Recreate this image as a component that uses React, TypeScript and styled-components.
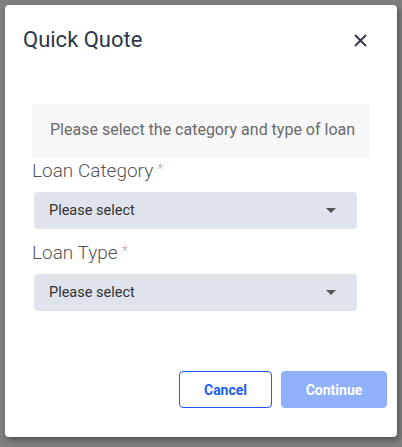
import React from 'react'
import styled, { createGlobalStyle } from 'styled-components'

const GlobalStyle = createGlobalStyle`
  html, body {
    margin: 0;
    padding: 0;
    background: #7f7f7f;
    font-family: Roboto, 'Liberation Sans', sans-serif;
  }
`

const Overlay = styled.div`
  width: 402px;
  height: 447px;
  padding: 5px;
  box-sizing: border-box;
`

const Modal = styled.div`
  width: 392px;
  height: 432px;
  background: #fff;
  border-radius: 4px;
  box-shadow: 2px 3px 6px rgba(0, 0, 0, 0.35);
  display: flex;
  flex-direction: column;
  box-sizing: border-box;
  padding: 22px 10px 29px 18px;
`

const Header = styled.div`
  display: flex;
  align-items: center;
  justify-content: space-between;
`

const Title = styled.h2`
  margin: 0;
  font-size: 22px;
  line-height: 26px;
  font-weight: 400;
  color: #2d3748;
`

const CloseButton = styled.button`
  border: 0;
  background: transparent;
  padding: 0;
  width: 14px;
  height: 14px;
  margin-right: 20px;
  display: flex;
  align-items: center;
  justify-content: center;
  cursor: pointer;
`

const Body = styled.div`
  display: flex;
  flex-direction: column;
  padding: 0 17px 0 9px;
  margin-top: 51px;
`

const Notice = styled.div`
  background: #f7f7f7;
  padding: 17px 18px 19px;
  font-size: 16px;
  line-height: 18px;
  color: #6a6a6a;
  white-space: nowrap;
`

const Label = styled.label<{ $gap: number }>`
  display: block;
  margin-top: ${(p) => p.$gap}px;
  font-size: 19px;
  line-height: 22px;
  font-weight: 300;
  color: #555;
`

const Required = styled.span`
  margin-left: 4px;
  font-size: 14px;
  color: #aaa;
  vertical-align: 3px;
`

const Select = styled.div`
  margin: 10px 13px 0 2px;
  height: 37px;
  background: #dfe3ec;
  border-radius: 4px;
  display: flex;
  align-items: center;
  justify-content: space-between;
  padding: 0 21px 0 15px;
  font-size: 14.5px;
  color: #333;
`

const Caret = styled.span`
  width: 0;
  height: 0;
  border-left: 5px solid transparent;
  border-right: 5px solid transparent;
  border-top: 5px solid #555;
`

const Footer = styled.div`
  margin-top: auto;
  display: flex;
  justify-content: flex-end;
  gap: 9px;
`

const Button = styled.button<{ $primary?: boolean }>`
  height: 37px;
  box-sizing: border-box;
  border-radius: 4px;
  font-family: Roboto, 'Liberation Sans', sans-serif;
  font-size: 14px;
  font-weight: 700;
  cursor: pointer;
  border: 1px solid ${(p) => (p.$primary ? '#8fb0fb' : '#1a5cf6')};
  background: ${(p) => (p.$primary ? '#8fb0fb' : '#fff')};
  color: ${(p) => (p.$primary ? '#fff' : '#1a5cf6')};
  width: ${(p) => (p.$primary ? 106 : 93)}px;
`

const Field = ({ label, gap }: { label: string; gap: number }) => (
  <>
    <Label $gap={gap}>
      {label}
      <Required>*</Required>
    </Label>
    <Select>
      Please select
      <Caret />
    </Select>
  </>
)

export default function App() {
  return (
    <>
      <GlobalStyle />
      <Overlay>
        <Modal>
          <Header>
            <Title>Quick Quote</Title>
            <CloseButton aria-label="Close">
              <svg width="13" height="13" viewBox="0 0 13 13">
                <path d="M1 1L12 12M12 1L1 12" stroke="#2d3748" strokeWidth="1.8" />
              </svg>
            </CloseButton>
          </Header>
          <Body>
            <Notice>Please select the category and type of loan</Notice>
            <Field label="Loan Category" gap={0} />
            <Field label="Loan Type" gap={11} />
          </Body>
          <Footer>
            <Button>Cancel</Button>
            <Button $primary>Continue</Button>
          </Footer>
        </Modal>
      </Overlay>
    </>
  )
}
